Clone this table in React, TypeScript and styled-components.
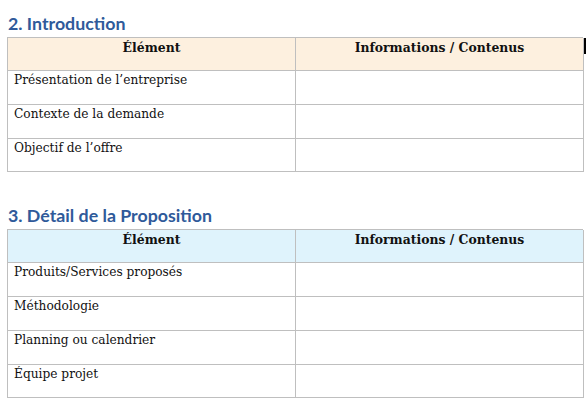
import React from "react";
import styled, { createGlobalStyle } from "styled-components";

const Global = createGlobalStyle`
  html, body { margin: 0; padding: 0; background: #ffffff; }
  body { width: 586px; height: 409px; overflow: hidden; }
`;

const Page = styled.div`
  padding: 11px 0 0 7px;
  width: 576px;
  display: flex;
  flex-direction: column;
`;

const Section = styled.section<{ $gap: number }>`
  display: flex;
  flex-direction: column;
  margin-bottom: ${(p) => p.$gap}px;
`;

const Heading = styled.h2`
  margin: 0 0 0 1px;
  height: 26px;
  font-family: "Lato", "Open Sans", sans-serif;
  font-weight: 700;
  font-size: 17.8px;
  line-height: 25px;
  color: #2f5a9a;
`;

const Table = styled.div`
  position: relative;
  display: grid;
  grid-template-columns: 288px 288px;
  border-top: 1px solid #bfbfbf;
  border-left: 1px solid #bfbfbf;
`;

const Cell = styled.div<{ $bg?: string; $head?: boolean; $h: number }>`
  box-sizing: border-box;
  height: ${(p) => p.$h}px;
  padding: 1px 6px 0;
  border-right: 1px solid #bfbfbf;
  border-bottom: 1px solid #bfbfbf;
  background: ${(p) => p.$bg ?? "#ffffff"};
  font-family: "DejaVu Serif", "Liberation Serif", serif;
  font-size: ${(p) => (p.$head ? "12.4px" : "12.2px")};
  font-weight: ${(p) => (p.$head ? 700 : 400)};
  text-align: ${(p) => (p.$head ? "center" : "left")};
  line-height: 17px;
  color: #111111;
  white-space: nowrap;
`;

const Caret = styled.span`
  position: absolute;
  right: -3px;
  top: 0;
  width: 2px;
  height: 16px;
  background: #000000;
`;

type Spec = { title: string; headBg: string; rows: [string, number][]; gap: number; caret?: boolean };

const sections: Spec[] = [
  {
    title: "2. Introduction",
    headBg: "#fdf0df",
    rows: [
      ["Présentation de l’entreprise", 34],
      ["Contexte de la demande", 34],
      ["Objectif de l’offre", 33],
    ],
    gap: 31,
    caret: true,
  },
  {
    title: "3. Détail de la Proposition",
    headBg: "#dff3fc",
    rows: [
      ["Produits/Services proposés", 34],
      ["Méthodologie", 34],
      ["Planning ou calendrier", 34],
      ["Équipe projet", 33],
    ],
    gap: 0,
  },
];

export default function App() {
  return (
    <>
      <Global />
      <Page>
        {sections.map((s) => (
          <Section key={s.title} $gap={s.gap}>
            <Heading>{s.title}</Heading>
            <Table>
              {s.caret && <Caret />}
              <Cell $head $h={33} $bg={s.headBg}>Élément</Cell>
              <Cell $head $h={33} $bg={s.headBg}>Informations / Contenus</Cell>
              {s.rows.map(([r, h]) => (
                <React.Fragment key={r}>
                  <Cell $h={h}>{r}</Cell>
                  <Cell $h={h} />
                </React.Fragment>
              ))}
            </Table>
          </Section>
        ))}
      </Page>
    </>
  );
}
